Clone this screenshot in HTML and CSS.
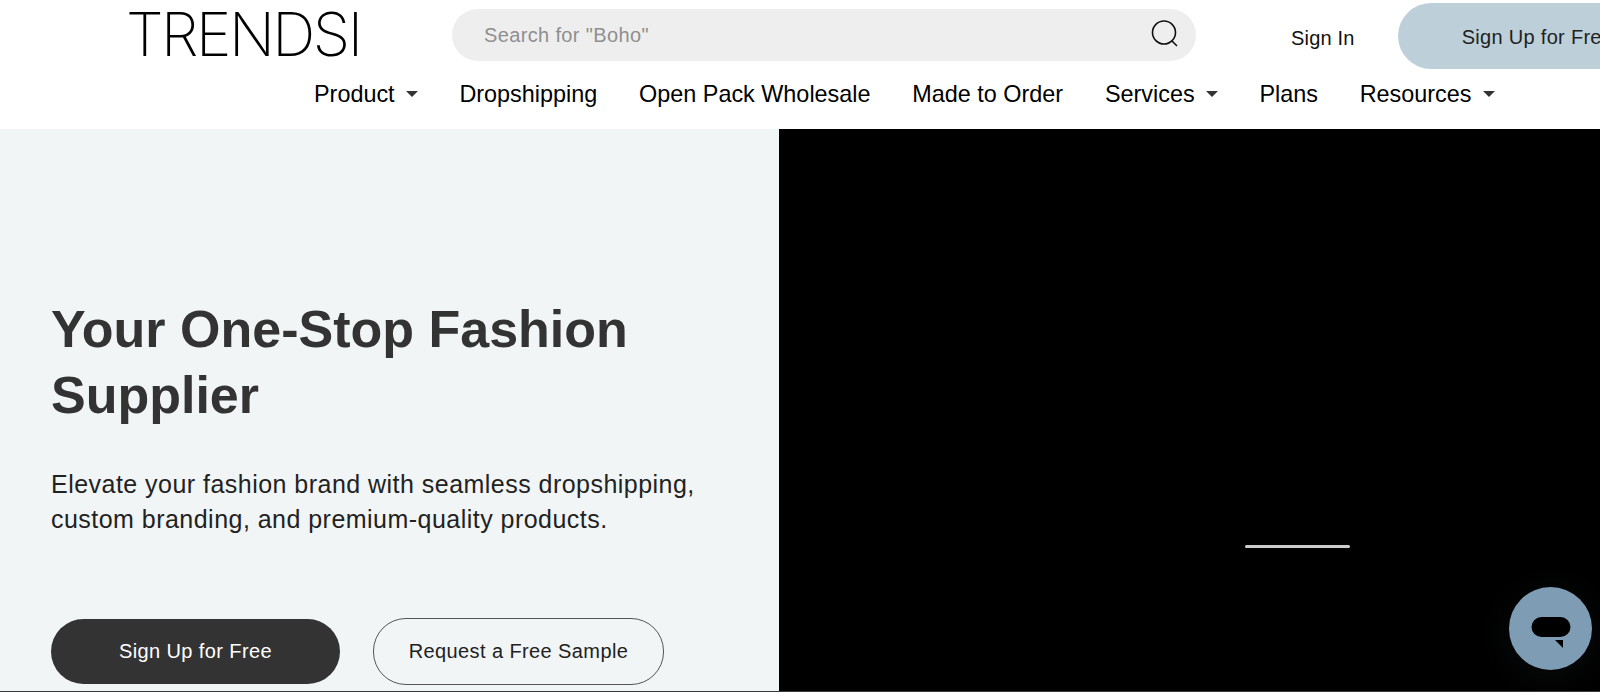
FILE: index.html
```html
<!DOCTYPE html>
<html lang="en">
<head>
    <meta charset="UTF-8">
    <title>Trendsi</title>
    <link rel="stylesheet" href="styles.css">
</head>
<body>

<header class="header">
    <div class="top-row">
        <a class="logo">TRENDSI</a>
        <div class="search">
            <span class="search-text">Search for "Boho"</span>
            <svg class="search-icon" viewBox="0 0 28 28" fill="none" stroke="#111" stroke-width="1.6">
                <circle cx="13" cy="12.5" r="11.5"/>
                <path d="M21 21l5 5"/>
            </svg>
        </div>
        <a class="sign-in">Sign In</a>
        <a class="sign-up">Sign Up for Free</a>
    </div>
    <nav class="nav">
        <a class="nav-item caret">Product</a>
        <a class="nav-item">Dropshipping</a>
        <a class="nav-item">Open Pack Wholesale</a>
        <a class="nav-item">Made to Order</a>
        <a class="nav-item caret">Services</a>
        <a class="nav-item">Plans</a>
        <a class="nav-item caret">Resources</a>
    </nav>
</header>

<main class="hero">
    <section class="hero-left">
        <h1>Your One-Stop Fashion Supplier</h1>
        <p>Elevate your fashion brand with seamless dropshipping, custom branding, and premium-quality products.</p>
        <div class="buttons">
            <a class="btn btn-dark">Sign Up for Free</a>
            <a class="btn btn-outline">Request a Free Sample</a>
        </div>
    </section>
    <section class="hero-video">
        <div class="video-bar"></div>
    </section>
</main>

<button class="chat">
    <svg viewBox="0 0 40 32" width="40" height="32">
        <rect x="0.5" y="0" width="39" height="20" rx="10" fill="#000"/>
        <path d="M24 23h8v8z" fill="#000"/>
    </svg>
</button>

</body>
</html>
```

FILE: styles.css
```css
* {
    margin: 0;
    padding: 0;
    box-sizing: border-box;
    font-family: "Liberation Sans", Arial, sans-serif;
}
body {
    width: 1600px;
    height: 692px;
    overflow: hidden;
    background: #000;
    border-bottom: 1px solid #3a3a3a;
    display: flex;
    flex-direction: column;
    position: relative;
}
.header {
    height: 129px;
    flex-shrink: 0;
    background: #fff;
}
.top-row {
    display: flex;
    align-items: flex-start;
    height: 72px;
    padding-left: 126px;
    white-space: nowrap;
}
.top-row > * {
    flex-shrink: 0;
}
.logo {
    font-family: Inter, sans-serif;
    font-weight: 150;
    font-size: 60px;
    line-height: 68px;
    letter-spacing: -2.5px;
    color: #000;
    width: 326px;
}
.search {
    width: 744px;
    height: 52px;
    margin-top: 9px;
    padding: 0 17px 0 32px;
    border-radius: 26px;
    background: #eee;
    display: flex;
    align-items: center;
    justify-content: space-between;
}
.search-text {
    font-size: 20px;
    letter-spacing: 0.36px;
    color: #8f8f8f;
}
.search-icon {
    width: 28px;
    height: 28px;
    margin-top: -3px;
}
.sign-in {
    font-size: 20px;
    letter-spacing: 0.2px;
    line-height: 26px;
    color: #111;
    margin: 25px 43px 0 95px;
}
.sign-up {
    width: 260px;
    height: 66px;
    margin-top: 3px;
    padding-left: 64px;
    border-radius: 33px;
    background: #bdd0da;
    font-size: 20px;
    line-height: 68px;
    letter-spacing: 0.3px;
    color: #222;
}
.nav {
    display: flex;
    gap: 41.8px;
    padding-left: 314px;
    padding-top: 1px;
    white-space: nowrap;
}
.nav-item {
    font-size: 23.4px;
    line-height: 42px;
    color: #000;
}
.caret::after {
    content: "";
    display: inline-block;
    margin-left: 11px;
    vertical-align: 5px;
    border-top: 6px solid #333;
    border-left: 6.5px solid transparent;
    border-right: 6.5px solid transparent;
}
.hero {
    flex: 1;
    display: flex;
    min-height: 0;
}
.hero-left {
    width: 779px;
    background: #f1f5f6;
    padding: 167px 0 0 51px;
}
.hero-left h1 {
    font-size: 52px;
    line-height: 66px;
    font-weight: 700;
    color: #333;
    width: 640px;
}
.hero-left p {
    margin-top: 39px;
    font-size: 25px;
    line-height: 34.5px;
    letter-spacing: 0.47px;
    color: #222;
    width: 700px;
}
.buttons {
    display: flex;
    align-items: center;
    gap: 33px;
    margin-top: 82px;
}
.btn {
    display: flex;
    align-items: center;
    justify-content: center;
    border-radius: 33px;
    font-size: 20px;
    letter-spacing: 0.4px;
}
.btn-dark {
    width: 289px;
    height: 65px;
    background: #333;
    color: #fff;
}
.btn-outline {
    width: 291px;
    height: 67px;
    border: 1px solid #555;
    color: #222;
}
.hero-video {
    flex: 1;
    background: #000;
    padding: 416px 0 0 466px;
}
.video-bar {
    width: 105px;
    height: 3px;
    border-radius: 2px;
    background: #ccc;
}
.chat {
    position: absolute;
    left: 1509px;
    top: 587px;
    width: 83px;
    height: 83px;
    border: none;
    border-radius: 50%;
    background: #7f9cb5;
    display: flex;
    align-items: center;
    justify-content: center;
    box-shadow: 0 6px 40px rgba(127, 156, 181, 0.08);
}
.chat svg {
    margin-top: 9px;
}
```
